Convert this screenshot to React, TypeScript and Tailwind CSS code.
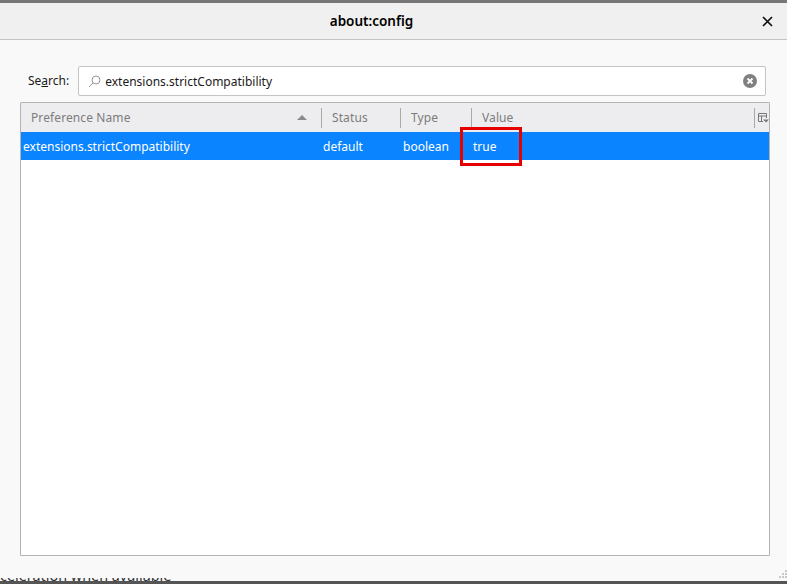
function HeaderCell({ label, className }: { label: string; className: string }) {
    return (
        <div className={`flex items-center shrink-0 h-[20px] border-l border-[#a9a9a9] pl-[10px] ${className}`}>
            {label}
        </div>
    )
}

export default function App() {
    return (
        <div className="w-[787px] h-[584px] flex flex-col overflow-hidden bg-[#f9f9f9] font-['Noto_Sans','Open_Sans',sans-serif] text-[12px] text-[#1a1a1a]">
            <div className="h-[3px] bg-[#777777] shrink-0" />

            <div className="relative h-[37px] shrink-0 flex items-center justify-center pr-[44px] pt-[1px] bg-[#f0f0f0] border-b border-[#c4c4c4]">
                <span className="text-[13.5px] font-semibold text-black">about:config</span>
                <svg className="absolute right-[14px] top-[13px]" width="11" height="11" viewBox="0 0 11 11">
                    <path d="M1 1 10 10M10 1 1 10" stroke="#111" strokeWidth="1.7" />
                </svg>
            </div>

            <div className="flex-1 min-h-0 flex flex-col pl-[20px] pr-[17px] pt-[26px]">
                <div className="flex items-center h-[30px] pl-[8px] pr-[4px] gap-[9px]">
                    <span>
                        Se<span className="underline">a</span>rch:
                    </span>
                    <div className="flex-1 h-[30px] flex items-center bg-white border border-[#c4c4c4] rounded-[2px] pl-[9px] pr-[8px]">
                        <svg width="13" height="13" viewBox="0 0 13 13" fill="none" stroke="#999999">
                            <circle cx="8" cy="5" r="4" />
                            <path d="M5 8 1 12" />
                        </svg>
                        <span className="ml-[4px] flex-1 pt-[1px]">extensions.strictCompatibility</span>
                        <svg width="14" height="14" viewBox="0 0 14 14">
                            <circle cx="7" cy="7" r="7" fill="#808080" />
                            <path d="M4.5 4.5 9.5 9.5M9.5 4.5 4.5 9.5" stroke="#fff" strokeWidth="1.8" />
                        </svg>
                    </div>
                </div>

                <div className="relative mt-[6px] h-[454px] bg-white border border-[#b4b4b4] rounded-t-[1px] flex flex-col">
                    <div className="h-[29px] flex items-center bg-[#ededef] text-[#7c7c7c] tracking-[0.1px]">
                        <div className="w-[300px] shrink-0 pl-[10px] flex items-center justify-between pr-[14px]">
                            <span>Preference Name</span>
                            <svg width="10" height="5" viewBox="0 0 10 5">
                                <path d="M5 0 10 5H0Z" fill="#8a8a8a" />
                            </svg>
                        </div>
                        <HeaderCell label="Status" className="w-[79px]" />
                        <HeaderCell label="Type" className="w-[71px]" />
                        <HeaderCell label="Value" className="w-[283px]" />
                        <div className="flex items-center h-[20px] border-l border-[#a9a9a9] pl-[3px]">
                            <svg width="11" height="10" viewBox="0 0 11 10">
                                <path d="M.5 8.5V.5H8.5V5M.5 3H8.5M3.5 3V8.5M.5 8.5H5" fill="none" stroke="#777" />
                                <path d="M5 6.5H11L8 9.5Z" fill="#777" />
                            </svg>
                        </div>
                    </div>
                    <div className="h-[28px] flex items-center bg-[#0a84ff] text-white pt-[1px]">
                        <div className="w-[300px] shrink-0 pl-[2px]">extensions.strictCompatibility</div>
                        <div className="w-[79px] shrink-0 pl-[2px]">default</div>
                        <div className="w-[71px] shrink-0 pl-[3px]">boolean</div>
                        <div className="pl-[2px]">true</div>
                    </div>
                    <div className="absolute left-[439px] top-[24px] w-[62px] h-[39px] border-[3px] border-[#e60000]" />
                </div>

                <div className="flex-1 min-h-0 flex items-end justify-end">
                    <svg width="8" height="8" viewBox="0 0 8 8" className="-mr-[17px]" fill="#c8c8c8">
                        <rect x="6" y="0" width="2" height="2" />
                        <rect x="3" y="3" width="2" height="2" />
                        <rect x="6" y="3" width="2" height="2" />
                        <rect x="0" y="6" width="2" height="2" />
                        <rect x="3" y="6" width="2" height="2" />
                        <rect x="6" y="6" width="2" height="2" />
                    </svg>
                </div>
            </div>

            {/* page behind the dialog, only the bottom of one line shows */}
            <div className="h-[3px] shrink-0 overflow-hidden">
                <div className="-mt-[10px] whitespace-nowrap text-[14.4px] leading-[16px] text-[#333]">
                    celeration when available
                </div>
            </div>
            <div className="h-[3px] shrink-0 bg-[#555555]" />
        </div>
    )
}
